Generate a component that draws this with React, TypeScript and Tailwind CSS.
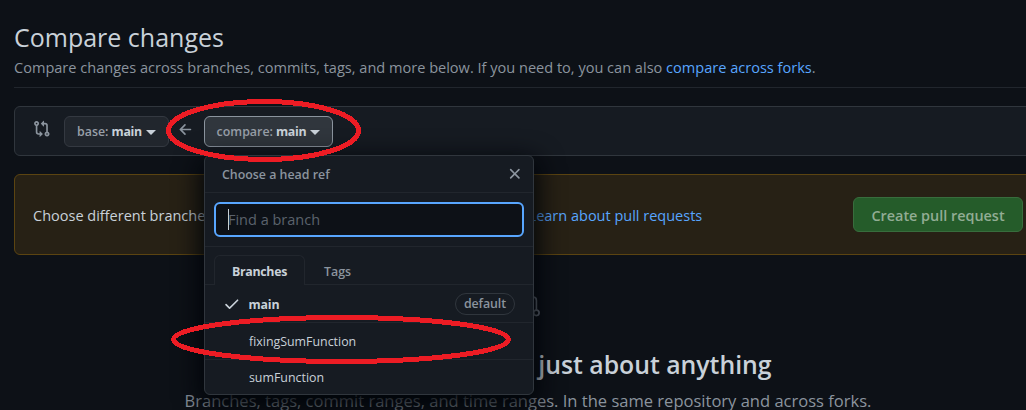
import type { ReactNode } from "react";
import { GoGitCompare } from "react-icons/go";

const ICONS = {
  compare:
    "M9.573.677L7.177 3.073a.25.25 0 000 .354l2.396 2.396A.25.25 0 0010 5.646V4h1a1 1 0 011 1v5.628a2.251 2.251 0 101.5 0V5A2.5 2.5 0 0011 2.5h-1V.854a.25.25 0 00-.427-.177zM6 12v-1.646a.25.25 0 01.427-.177l2.396 2.396a.25.25 0 010 .354l-2.396 2.396A.25.25 0 016 15.146V13.5H5A2.5 2.5 0 012.5 11V5.372a2.25 2.25 0 111.5 0V11a1 1 0 001 1h1zm6.75 0a.75.75 0 100 1.5.75.75 0 000-1.5zM4 3.25a.75.75 0 11-1.5 0 .75.75 0 011.5 0z",
  arrowLeft:
    "M7.78 12.53a.75.75 0 01-1.06 0L2.47 8.28a.75.75 0 010-1.06l4.25-4.25a.75.75 0 011.06 1.06L4.81 7h7.44a.75.75 0 010 1.5H4.81l2.97 2.97a.75.75 0 010 1.06z",
  check:
    "M13.78 4.22a.75.75 0 010 1.06l-7.25 7.25a.75.75 0 01-1.06 0L2.22 9.28a.75.75 0 011.06-1.06L6 10.94l6.72-6.72a.75.75 0 011.06 0z",
  close:
    "M3.72 3.72a.75.75 0 011.06 0L8 6.94l3.22-3.22a.75.75 0 111.06 1.06L9.06 8l3.22 3.22a.75.75 0 11-1.06 1.06L8 9.06l-3.22 3.22a.75.75 0 01-1.06-1.06L6.94 8 3.72 4.78a.75.75 0 010-1.06z",
};

function Icon({ name, className }: { name: keyof typeof ICONS; className: string }) {
  return (
    <svg viewBox="0 0 16 16" fill="currentColor" className={className}>
      <path fillRule="evenodd" d={ICONS[name]} />
    </svg>
  );
}

function Caret() {
  return <span className="ml-[4px] inline-block border-x-[5px] border-t-[5px] border-x-transparent border-t-current" />;
}

function RefButton({ label, value, active = false }: { label: string; value: string; active?: boolean }) {
  return (
    <button
      className={
        active
          ? "flex h-[31px] w-[129px] items-center justify-center rounded-md border border-[#8b949e] bg-[#30363d] pt-[2px] text-[12.4px] font-semibold text-[#c9d1d9]"
          : "flex h-[31px] w-[105px] items-center justify-center rounded-md border border-[#343941] bg-[#21262d] pt-[2px] text-[12.4px] font-semibold text-[#c9d1d9]"
      }
    >
      <span className="mr-[3px] text-[#989fa8]">{label}</span>
      <span className="font-bold tracking-[-0.3px]">{value}</span>
      <Caret />
    </button>
  );
}

function BranchRow({ children, first = false }: { children: ReactNode; first?: boolean }) {
  return (
    <div
      className={
        first
          ? "flex h-[37px] items-center pl-[18px] pr-[18px] pt-[2px] text-[12.4px] text-[#c9d1d9]"
          : "flex h-[37px] items-center border-t border-[#21262d] pl-[44px] pt-px text-[12.4px] text-[#c9d1d9]"
      }
    >
      {children}
    </div>
  );
}

function BranchMenu() {
  return (
    <div className="absolute left-0 top-[39px] z-10 h-[240px] w-[330px] overflow-hidden rounded-md border border-[#30363d] bg-[#161b22] shadow-[0_8px_26px_4px_#010409]">
      <div className="flex h-[37px] items-center justify-between border-b border-[#21262d] pl-[17px] pr-[9px]">
        <span className="pt-[4px] text-[12.4px] font-semibold text-[#8b949e]">Choose a head ref</span>
        <Icon name="close" className="mt-px size-[17.6px] text-[#8b949e]" />
      </div>
      <div className="h-[54px] border-b border-[#21262d] px-[9px] pt-[9px]">
        <div className="flex h-[35px] items-center rounded-md border-2 border-[#58a6ff] bg-[#0d1117] pl-[12px]">
          <span className="h-[21px] w-px bg-[#c9d1d9]" />
          <span className="-ml-px pt-px text-[14.5px] text-[#5b626c]">Find a branch</span>
        </div>
      </div>
      <div className="flex h-[38px] items-end border-b border-[#21262d] px-[9px] text-[12.4px] font-semibold">
        <div className="-mb-px flex h-[30px] w-[91px] items-center justify-center rounded-t-md border border-b-0 border-[#21262d] bg-[#161b22] pt-[5px] font-bold tracking-[-0.3px] text-[#c9d1d9]">
          Branches
        </div>
        <div className="flex h-[29px] items-center pl-[19px] pt-[6px] text-[#8b949e]">Tags</div>
      </div>
      <BranchRow first>
        <Icon name="check" className="mr-[8px] size-[17.6px]" />
        <span className="grow pt-[2px] font-bold tracking-[-0.2px]">main</span>
        <span className="flex h-[22px] w-[60px] items-center justify-center rounded-full border border-[#30363d] pt-px font-semibold tracking-[-0.1px] text-[#8b949e]">
          default
        </span>
      </BranchRow>
      <BranchRow>
        <span className="pt-[3px]">fixingSumFunction</span>
      </BranchRow>
      <BranchRow>sumFunction</BranchRow>
    </div>
  );
}

function Annotations() {
  return (
    <svg
      className="pointer-events-none absolute inset-0 z-20"
      width="1026"
      height="410"
      fill="none"
      stroke="#ed1c24"
      strokeWidth="5"
      shapeRendering="crispEdges"
    >
      <ellipse cx="263.5" cy="130.5" rx="95" ry="29" />
      <ellipse cx="341" cy="339.5" rx="167.5" ry="22" />
    </svg>
  );
}

export default function App() {
  return (
    <div className="relative h-[410px] w-[1026px] overflow-hidden bg-[#0d1117] font-['Open_Sans','Noto_Sans',sans-serif] text-[14.5px] text-[#c9d1d9]">
      <main className="ml-[14px] w-[1028px]">
        <header className="h-[88px] border-b border-[#21262d] pt-[20px]">
          <h1 className="h-[36px] text-[25px] leading-[35px]">Compare changes</h1>
          <p className="text-[14.55px] leading-[23px] text-[#8b949e]">
            Compare changes across branches, commits, tags, and more below. If you need to, you can also{" "}
            <a className="text-[#58a6ff]">compare across forks</a>.
          </p>
        </header>

        <section className="mt-[18px] flex h-[50px] items-center rounded-md border border-[#30363d] bg-[#161b22] pl-[18px]">
          <Icon name="compare" className="mb-[4px] size-[17.6px] text-[#8b949e]" />
          <div className="ml-[13.4px]">
            <RefButton label="base:" value="main" />
          </div>
          <Icon name="arrowLeft" className="mb-[2px] ml-[8px] mr-[9.4px] size-[17.6px] text-[#8b949e]" />
          <div className="relative">
            <RefButton label="compare:" value="main" active />
            <BranchMenu />
          </div>
        </section>

        <section className="mt-[18px] flex h-[81px] items-center justify-between rounded-md border border-[#5b4411] bg-[#272115] pl-[18px] pr-[18px]">
          <p className="whitespace-nowrap pt-[2px]">
            Choose different branches or forks above to discuss and review changes.{" "}
            <a className="text-[#58a6ff]">Learn about pull requests</a>
          </p>
          <button className="h-[35px] w-[170px] rounded-md border border-[#386d3d] bg-[#255c2a] pt-[2px] text-[14.4px] font-semibold text-[#92ad94]">
            Create pull request
          </button>
        </section>

        <section className="flex flex-col items-center pt-[37px]">
          <GoGitCompare className="size-[26px] text-[#6e7681]" />
          <h2 className="mt-[28px] whitespace-nowrap text-[24.8px] font-semibold leading-[36px]">
            Compare and review just about anything
          </h2>
          <p className="mt-[5px] whitespace-nowrap text-[16.55px] leading-[28px] text-[#8b949e]">
            Branches, tags, commit ranges, and time ranges. In the same repository and across forks.
          </p>
        </section>
      </main>
      <Annotations />
    </div>
  );
}
